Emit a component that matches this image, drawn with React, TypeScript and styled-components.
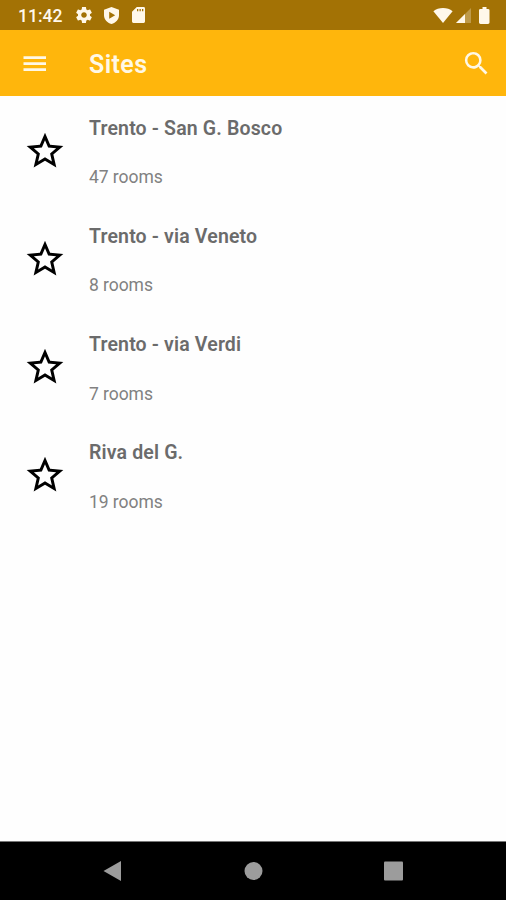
import React from "react";
import styled, { createGlobalStyle } from "styled-components";

const GlobalStyle = createGlobalStyle`
  * { box-sizing: border-box; }
  body { margin: 0; background: #fff; font-family: Roboto, sans-serif; }
`;

const Screen = styled.div`
  display: flex;
  flex-direction: column;
  width: 506px;
  height: 900px;
  overflow: hidden;
  background: #fefefe;
`;

const StatusBar = styled.header`
  display: flex;
  align-items: center;
  flex: none;
  height: 30px;
  padding: 0 16px 0 18px;
  background: #a37205;
  color: #fff8ea;
`;

const Clock = styled.time`
  width: 58px;
  padding-top: 1px;
  font-size: 17.5px;
  font-weight: 500;
  line-height: 30px;
  white-space: nowrap;
`;

const StatusIcons = styled.div<{ $gap: number; $end?: boolean }>`
  display: flex;
  align-items: center;
  gap: ${(p) => p.$gap}px;
  margin-left: ${(p) => (p.$end ? "auto" : "0")};
`;

const Icon = styled.svg`
  display: block;
  flex: none;
  fill: currentColor;
`;

const AppBar = styled.nav`
  display: flex;
  align-items: center;
  flex: none;
  height: 66px;
  padding: 1px 14px 0 19px;
  background: #ffb60c;
  color: #fff8e6;
`;

const BarButton = styled.button`
  display: flex;
  padding: 0;
  border: 0;
  background: none;
  color: inherit;
`;

const SearchButton = styled(BarButton)`
  padding-bottom: 1px;
`;

const Title = styled.h1`
  flex: 1;
  margin: 2px 0 0 38px;
  font-size: 25px;
  font-weight: 600;
  line-height: 30px;
  letter-spacing: 0.4px;
`;

const SiteList = styled.ul`
  flex: 1;
  margin: 0;
  padding: 0;
  list-style: none;
`;

const SiteRow = styled.li`
  display: flex;
  height: 108.3px;
  padding: 20.5px 0 0 23px;
`;

const StarButton = styled(BarButton)`
  width: 66px;
  height: 44px;
  padding-top: 12px;
  color: #000;
`;

const SiteName = styled.h2`
  margin: 0;
  font-size: 19.5px;
  font-weight: 600;
  line-height: 24px;
  letter-spacing: 0.15px;
  color: #6b6b6b;
`;

const RoomCount = styled.p`
  margin: 24.5px 0 0;
  font-size: 17.5px;
  font-weight: 400;
  line-height: 24px;
  letter-spacing: -0.06px;
  color: #818181;
`;

const NavigationBar = styled.footer`
  display: flex;
  justify-content: space-between;
  align-items: center;
  flex: none;
  height: 59px;
  padding: 0 102px;
  border-top: 1px solid #777;
  background: #000;
  color: #9c9c9c;
`;

const sites = [
  { name: "Trento - San G. Bosco", rooms: 47 },
  { name: "Trento - via Veneto", rooms: 8 },
  { name: "Trento - via Verdi", rooms: 7 },
  { name: "Riva del G.", rooms: 19 },
];

const GEAR =
  "M19.43 12.98c.04-.32.07-.64.07-.98s-.03-.66-.07-.98l2.11-1.65c.19-.15.24-.42.12-.64l-2-3.46c-.12-.22-.39-.3-.61-.22l-2.49 1c-.52-.4-1.08-.73-1.69-.98l-.38-2.65C14.46 2.18 14.25 2 14 2h-4c-.25 0-.46.18-.49.42l-.38 2.65c-.61.25-1.17.59-1.69.98l-2.49-1c-.23-.09-.49 0-.61.22l-2 3.46c-.13.22-.07.49.12.64l2.11 1.65c-.04.32-.07.65-.07.98s.03.66.07.98l-2.11 1.65c-.19.15-.24.42-.12.64l2 3.46c.12.22.39.3.61.22l2.49-1c.52.4 1.08.73 1.69.98l.38 2.65c.03.24.24.42.49.42h4c.25 0 .46-.18.49-.42l.38-2.65c.61-.25 1.17-.59 1.69-.98l2.49 1c.23.09.49 0 .61-.22l2-3.46c.12-.22.07-.49-.12-.64l-2.11-1.65zM12 15.5c-1.93 0-3.5-1.57-3.5-3.5s1.57-3.5 3.5-3.5 3.5 1.57 3.5 3.5-1.57 3.5-3.5 3.5z";
const STAR =
  "M22 9.24l-7.19-.62L12 2 9.19 8.63 2 9.24l5.46 4.73L5.82 21 12 17.27 18.18 21l-1.63-7.03L22 9.24zM12 15.4l-3.76 2.27 1-4.28-3.32-2.88 4.38-.38L12 6.1l1.71 4.04 4.38.38-3.32 2.88 1 4.28L12 15.4z";
const SEARCH =
  "M15.5 14h-.79l-.28-.27A6.471 6.471 0 0 0 16 9.5 6.5 6.5 0 1 0 9.5 16c1.61 0 3.09-.59 4.23-1.57l.27.28v.79l5 4.99L20.49 19l-4.99-5zm-6 0C7.01 14 5 11.99 5 9.5S7.01 5 9.5 5 14 7.01 14 9.5 11.99 14 9.5 14z";

export default function App() {
  return (
    <>
      <GlobalStyle />
      <Screen>
        <StatusBar>
          <Clock>11:42</Clock>
          <StatusIcons $gap={12}>
            <Icon width="16" height="16" viewBox="2 2 20 20">
              <path d={GEAR} />
            </Icon>
            <Icon width="15" height="17" viewBox="0 0 15 17">
              <path
                fillRule="evenodd"
                d="M7.5 0 15 2.8v5.4c0 4.1-3.1 7.6-7.5 8.8C3.1 15.8 0 12.3 0 8.2V2.8zM5.2 4.7v7l6-3.5z"
              />
            </Icon>
            <Icon width="14" height="16" viewBox="0 0 14 16">
              <path
                fillRule="evenodd"
                d="M5.800 0H12.600Q14 0 14 1.400V14.600Q14 16 12.600 16H2.400Q1 16 1 14.600V4.800zM6 2v2.300h1.300V2zM8.500 2v2.300h1.300V2zM11 2v2.300h1.300V2z"
              />
            </Icon>
          </StatusIcons>
          <StatusIcons $gap={2.5} $end>
            <Icon width="20" height="15" viewBox="0 0 20 15">
              <path d="M10 15 .4 3.2C3 1 6.3 0 10 0s7 1 9.6 3.2z" />
            </Icon>
            <Icon width="15" height="15" viewBox="0 0 15 15">
              <path d="M15 0v15H0z" opacity=".3" />
              <path d="M9 6v9H0z" />
            </Icon>
            <Icon width="17" height="17" viewBox="0 0 17 17">
              <path d="M9.500 0h4v2h1.500Q16.500 2 16.500 3.200V15.600Q16.500 17 15 17H7.500Q6 17 6 15.600V3.200Q6 2 7.500 2H9.500z" />
            </Icon>
          </StatusIcons>
        </StatusBar>
        <AppBar>
          <BarButton aria-label="Menu">
            <Icon width="32" height="32" viewBox="0 0 32 32">
              <path d="M4.500 8.200h22.500v2.800H4.500zM4.500 14.200h22.500v2.800H4.500zM4.500 20.200h22.500v2.800H4.500z" />
            </Icon>
          </BarButton>
          <Title>Sites</Title>
          <SearchButton aria-label="Search">
            <Icon width="31" height="31" viewBox="0 0 24 24">
              <path d={SEARCH} />
            </Icon>
          </SearchButton>
        </AppBar>
        <SiteList>
          {sites.map((site) => (
            <SiteRow key={site.name}>
              <StarButton aria-label="Favourite">
                <Icon width="44" height="44" viewBox="0 0 24 24">
                  <path d={STAR} />
                </Icon>
              </StarButton>
              <div>
                <SiteName>{site.name}</SiteName>
                <RoomCount>{site.rooms} rooms</RoomCount>
              </div>
            </SiteRow>
          ))}
        </SiteList>
        <NavigationBar>
          <Icon width="20" height="22" viewBox="0 0 20 22">
            <path d="M1.500 11 19 1v20z" />
          </Icon>
          <Icon width="20" height="20" viewBox="0 0 20 20">
            <circle cx="10.500" cy="10" r="9" />
          </Icon>
          <Icon width="20" height="20" viewBox="0 0 20 20">
            <rect x="0" y=".5" width="19" height="19" rx="1" />
          </Icon>
        </NavigationBar>
      </Screen>
    </>
  );
}
